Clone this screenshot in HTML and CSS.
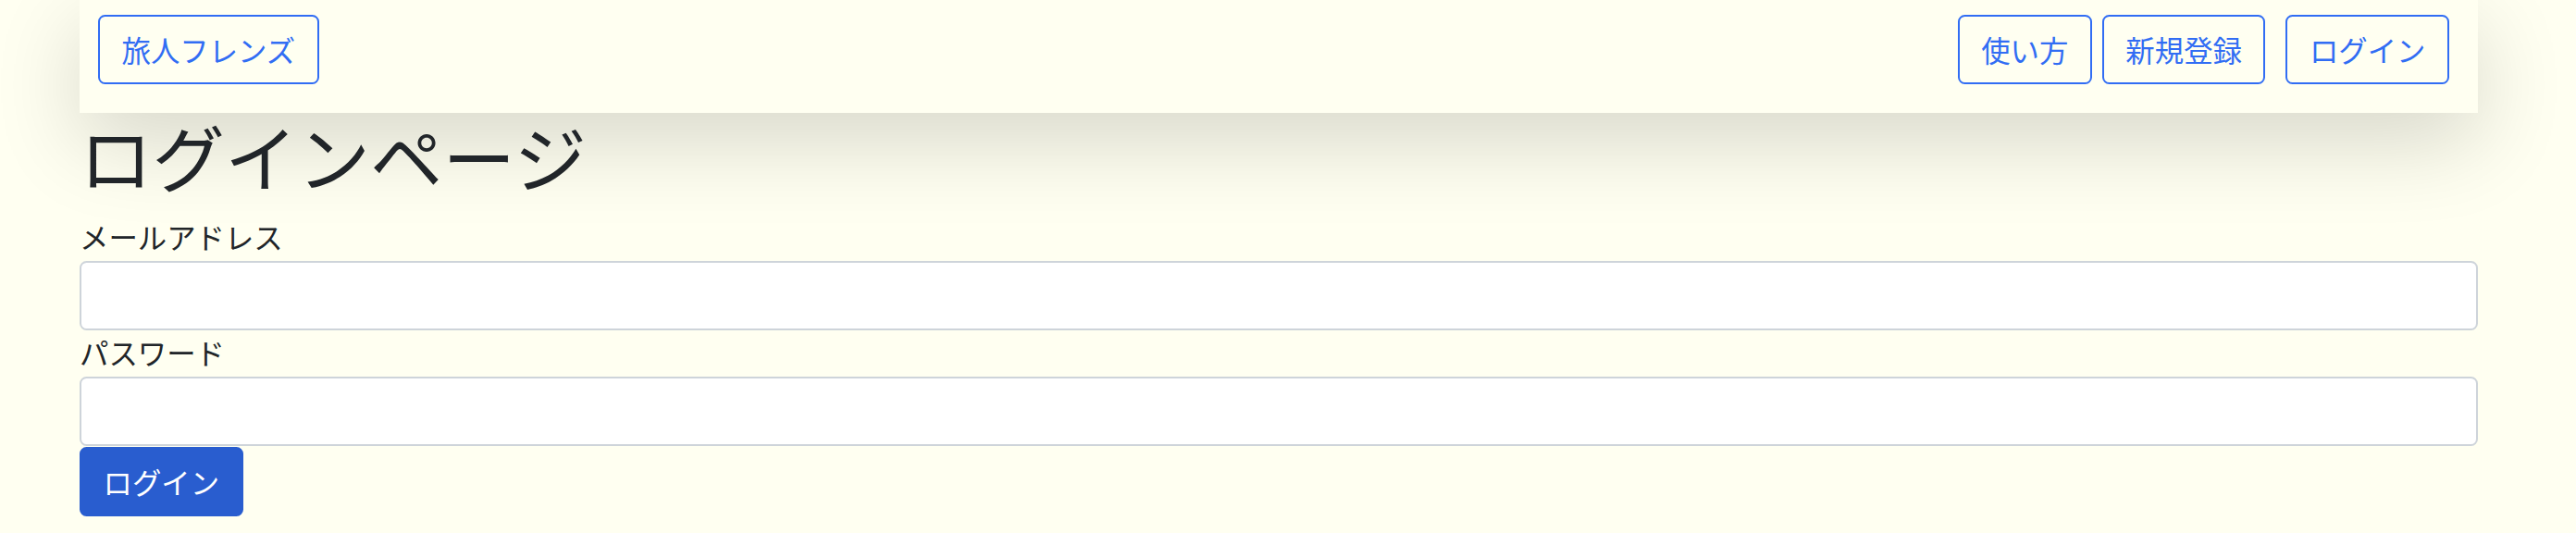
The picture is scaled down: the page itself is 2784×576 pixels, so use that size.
FILE: index.html
```html
<!DOCTYPE html>
<html lang="ja">
<head>
<meta charset="utf-8">
<title>ログインページ</title>
<link rel="stylesheet" href="styles.css">
</head>
<body>
<div class="container">
  <nav class="navbar">
    <a class="btn btn-outline" href="#">旅人フレンズ</a>
    <div class="nav-right">
      <a class="btn btn-outline" href="#">使い方</a>
      <a class="btn btn-outline gap-s" href="#">新規登録</a>
      <a class="btn btn-outline gap-l" href="#">ログイン</a>
    </div>
  </nav>
  <h1 class="title">ログインページ</h1>
  <form class="login-form">
    <label class="field-label" for="email">メールアドレス</label>
    <input class="field-input field-first" id="email" type="email">
    <label class="field-label" for="password">パスワード</label>
    <input class="field-input field-second" id="password" type="password">
    <button class="btn btn-primary" type="button">ログイン</button>
  </form>
</div>
</body>
</html>
```
FILE: styles.css
```css
html, body {
  margin: 0;
  padding: 0;
}
body {
  background: #fffff1;
  color: #212529;
  font-family: "Noto Sans CJK JP", "Noto Sans", sans-serif;
  font-size: 31.4px;
  line-height: 1.5;
}
.container {
  margin-left: 86px;
  width: 2592px;
}
.navbar {
  display: flex;
  justify-content: space-between;
  align-items: flex-start;
  box-sizing: border-box;
  height: 122px;
  padding: 16px 31px 0 20px;
  background: #fffff1;
  box-shadow: 0 31px 94px rgba(0, 0, 0, 0.16);
}
.nav-right {
  display: flex;
}
.btn {
  display: inline-block;
  box-sizing: border-box;
  height: 75px;
  padding: 11px 23.5px;
  font-family: inherit;
  font-size: 31.4px;
  line-height: 49px;
  font-weight: 400;
  border: 2px solid transparent;
  border-radius: 7.5px;
  text-decoration: none;
  cursor: pointer;
}
.btn-outline {
  color: #316df4;
  border-color: #316df4;
  background: transparent;
}
.gap-s {
  margin-left: 11px;
}
.gap-l {
  margin-left: 22px;
}
.title {
  margin: 0 0 19px;
  font-size: 78.5px;
  line-height: 92px;
  padding-bottom: 2px;
  font-weight: 400;
}
.login-form {
  display: flex;
  flex-direction: column;
  align-items: flex-start;
}
.field-label {
  display: block;
  line-height: 42px;
  padding-bottom: 5px;
}
.field-input {
  display: block;
  box-sizing: border-box;
  width: 100%;
  height: 75px;
  margin: 0;
  border: 2px solid #ced4da;
  border-radius: 7.5px;
  background: #ffffff;
}
.field-first {
  margin-bottom: 3px;
}
.field-second {
  margin-bottom: 1px;
}
.btn-primary {
  color: #ffffff;
  background: #295dcf;
  border-color: #295dcf;
}
```
